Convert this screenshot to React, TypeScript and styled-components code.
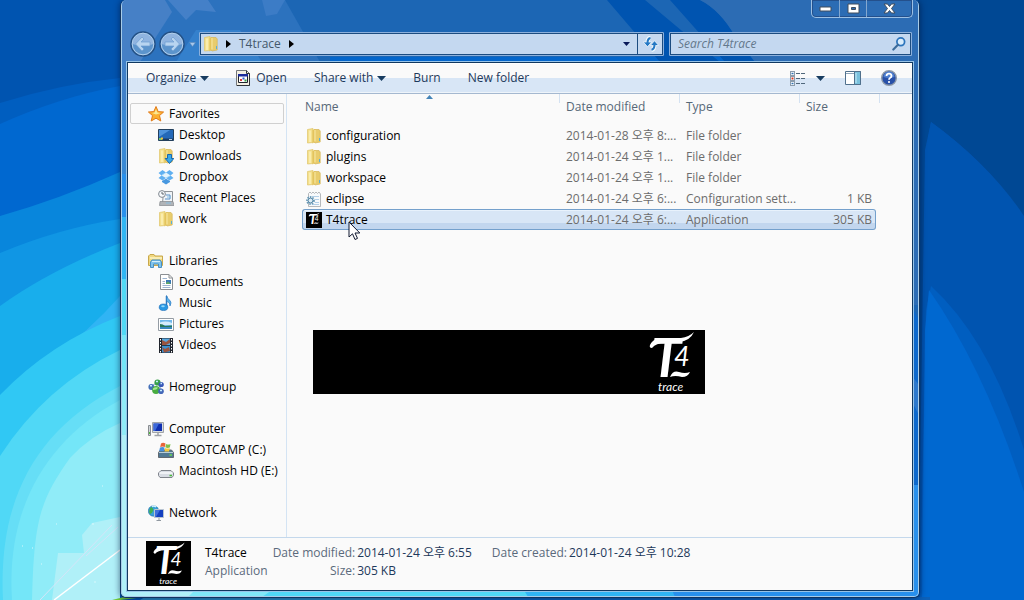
import React from "react";
import styled, { createGlobalStyle, css } from "styled-components";

const GlobalStyle = createGlobalStyle`
  * { box-sizing: border-box; }
  body {
    margin: 0;
    background: #0054b0;
    font-family: "Open Sans", "Noto Sans CJK KR", sans-serif;
    font-size: 12px;
    line-height: 18px;
    color: #000;
  }
  button, input { font: inherit; }
  ul { list-style: none; margin: 0; padding: 0; }
  svg { display: block; flex: none; }
`;

/* ---------- desktop and window ---------- */

const Desktop = styled.div`
  position: relative;
  display: flex;
  min-height: 100vh;
  padding: 0 104px 2px 120px;
  overflow: hidden;
`;

const Backdrop = styled.svg`
  position: absolute;
  inset: 0;
  width: 100%;
  height: 100%;
`;

const WindowFrame = styled.main`
  position: relative;
  flex: 1;
  min-width: 0;
  display: flex;
  flex-direction: column;
  padding: 0 6px 6px;
  border: 1px solid #103460;
  border-top: 0;
  border-radius: 6px;
  overflow: hidden;
  background: #2c70bc;
  box-shadow: 0 0 6px rgba(0, 20, 60, 0.6);

  &::after {
    content: "";
    position: absolute;
    inset: 0;
    border: 1px solid #a8cce8;
    border-top: 0;
    border-radius: 5px;
    pointer-events: none;
  }
`;

const TitleBar = styled.div`
  position: relative;
  display: flex;
  justify-content: flex-end;
  height: 32px;
`;

const WindowButtons = styled.div`
  display: flex;
  height: 18px;
  border: 1px solid #9cc0e4;
  border-top: 0;
  border-radius: 0 0 5px 5px;
  box-shadow: inset 0 0 0 1px #24508c;
`;

const WindowButton = styled.button<{ $wide?: boolean }>`
  display: flex;
  align-items: center;
  justify-content: center;
  width: ${(p) => (p.$wide ? 46 : 27)}px;
  padding: 0;
  border: 0;
  background: transparent;
  & + & { border-left: 1px solid #84a8d0; }
`;

const NavBar = styled.div`
  position: relative;
  display: flex;
  align-items: center;
  height: 24px;
  margin-bottom: 6px;
  padding: 0 1px 0 3px;
`;

const IconButton = styled.button`
  display: flex;
  align-items: center;
  justify-content: center;
  padding: 0;
  border: 0;
  background: transparent;
`;

const HistoryGroup = styled.div`
  display: flex;
  gap: 3px;
`;

const HistoryButton = styled(IconButton)`
  width: 14px;
`;

const field = css`
  display: flex;
  align-items: center;
  height: 24px;
  border: 1px solid #8cb0dc;
  box-shadow: inset 0 0 0 1px #1c4c80;
  background: #c4d8f0;
  border-radius: 1px;
`;

const AddressBar = styled.div`
  ${field}
  flex: 1;
  min-width: 0;
  margin-right: 5px;
  padding-left: 3px;
`;

const Breadcrumbs = styled.nav`
  display: flex;
  align-items: center;
  gap: 8px;
  margin-left: 7px;
`;

const Crumb = styled.a`
  color: #44586c;
  text-decoration: none;
`;

const AddressTools = styled.div`
  display: flex;
  align-self: stretch;
  margin-left: auto;
`;

const AddressTool = styled(IconButton)`
  width: 22px;
  & + & { width: 26px; border-left: 1px solid #1c4c80; }
`;

const SearchBox = styled.label`
  ${field}
  width: 243px;
  padding: 0 5px 0 8px;
`;

const SearchInput = styled.input`
  flex: 1;
  min-width: 0;
  padding: 0;
  border: 0;
  outline: 0;
  background: transparent;
  font-style: italic;
  &::placeholder { color: #64788c; opacity: 1; }
`;

const Client = styled.div`
  position: relative;
  flex: 1;
  display: flex;
  flex-direction: column;
  border: 1px solid #103860;
  outline: 1px solid #98c4e8;
  background: #fafafa;
`;

/* ---------- command bar ---------- */

const CommandBar = styled.div`
  display: flex;
  align-items: center;
  justify-content: space-between;
  height: 31px;
  padding: 0 15px 1px 18px;
  border-top: 1px solid #fff;
  border-bottom: 1px solid #a4b8d0;
  background: linear-gradient(#fafafa 0 14px, #d8e6f6 14px 28px, #eef4fa 28px);
`;

const CommandGroup = styled.div<{ $gap: number }>`
  display: flex;
  align-items: center;
  gap: ${(p) => p.$gap}px;
`;

const Command = styled.button<{ $gap?: number }>`
  display: flex;
  align-items: center;
  gap: ${(p) => p.$gap ?? 4}px;
  padding: 0;
  border: 0;
  background: transparent;
  color: #1e395b;
  white-space: nowrap;
`;

/* ---------- navigation pane ---------- */

const Body = styled.div`
  flex: 1;
  display: flex;
  min-height: 0;
`;

const Sidebar = styled.nav`
  flex: none;
  width: 159px;
  padding: 9px 2px 14px;
  border-right: 1px solid #d4e4f4;
`;

const Section = styled.section`
  & + & { margin-top: 21px; }
`;

const NavLink = styled.a<{ $nested?: boolean; $focused?: boolean }>`
  display: flex;
  align-items: center;
  gap: 5px;
  height: 21px;
  padding-left: ${(p) => (p.$nested ? 27 : 17)}px;
  border: 1px solid ${(p) => (p.$focused ? "#d0d0d0" : "transparent")};
  border-radius: 2px;
  color: #000;
  text-decoration: none;
  white-space: nowrap;
`;

/* ---------- file list ---------- */

const FilePane = styled.section`
  flex: 1;
  min-width: 0;
  padding-left: 15px;
`;

const FileTable = styled.table`
  width: 574px;
  table-layout: fixed;
  border-collapse: separate;
  border-spacing: 0;
`;

const HeadCell = styled.th<{ $width: number; $first?: boolean; $last?: boolean }>`
  position: relative;
  width: ${(p) => p.$width}px;
  height: 31px;
  padding: 4px 0 0 ${(p) => (p.$first ? 3 : 6)}px;
  vertical-align: top;
  text-align: left;
  font-weight: 400;
  color: #566878;

  &::after {
    content: "";
    position: absolute;
    top: 0;
    right: ${(p) => (p.$last ? -4 : 0)}px;
    width: 1px;
    height: 9px;
    background: #d4e2f2;
  }
`;

const SortMark = styled.span`
  position: absolute;
  top: 1px;
  left: 0;
  right: 4px;
  display: flex;
  justify-content: center;
`;

const FileRow = styled.tr<{ $selected?: boolean }>`
  ${(p) =>
    p.$selected &&
    css`
      td {
        border-top-color: #74a0cc;
        border-bottom-color: #74a0cc;
        background: linear-gradient(#e8f2fc 0 1px, #d8e6f6 1px 13px, #c2d6ee 13px);
      }
      td:first-child { border-left-color: #74a0cc; border-radius: 3px 0 0 3px; }
      td:last-child { border-right-color: #74a0cc; border-radius: 0 3px 3px 0; }
    `}
`;

const Cell = styled.td<{ $right?: boolean }>`
  height: 21px;
  padding: 0 ${(p) => (p.$right ? 3 : 0)}px 0 6px;
  border: solid transparent;
  border-width: 1px 0;
  line-height: 19px;
  color: #6c6c6c;
  text-align: ${(p) => (p.$right ? "right" : "left")};
  white-space: nowrap;
  &:last-child { border-right-width: 1px; }
`;

const NameCell = styled(Cell)`
  position: relative;
  padding-left: 3px;
  border-left-width: 1px;
  color: #000;
`;

const NameLine = styled.span`
  display: flex;
  align-items: center;
  gap: 4px;
  height: 19px;
`;

const Pointer = styled.span`
  position: absolute;
  left: 45px;
  top: 11px;
  z-index: 1;
`;

const Banner = styled.div`
  display: flex;
  justify-content: flex-end;
  width: 392px;
  margin: 100px 0 0 11px;
  padding-right: 2px;
  background: #000;
`;

/* ---------- details pane ---------- */

const Details = styled.footer`
  display: flex;
  height: 53px;
  padding: 3px 18px 0;
  border-top: 1px solid #c4d8ec;
  color: #5a6a7c;
`;

const Title = styled.div`
  margin: 3px 5px 0 14px;
`;

const FileTitle = styled.div`
  color: #000;
`;

const Facts = styled.dl`
  display: grid;
  grid-template-columns: auto auto;
  align-content: start;
  column-gap: 2px;
  margin: 3px 20px 0 0;
  dt { text-align: right; }
  dd { margin: 0; color: #1e395b; }
`;

/* ---------- drawings ---------- */

const Wallpaper = () => (
  <Backdrop viewBox="0 0 1024 600" preserveAspectRatio="none" aria-hidden="true">
    <rect width="1024" height="600" fill="#0054b0" />
    <path d="M0 103 Q60 84 120 78V600H0Z" fill="#005ec0" />
    <path d="M0 124 Q60 97 120 86V600H0Z" fill="#0068d0" />
    <path d="M0 216 Q60 199 120 172V600H0Z" fill="#0886dc" />
    <path d="M0 253 Q60 228 120 219V600H0Z" fill="#1096e4" />
    <path d="M0 306 Q50 270 120 243V600H0Z" fill="#18aeec" />
    <path d="M48 362 Q90 330 120 296V600H48Z" fill="#30b4f4" />
    <path d="M0 395 Q50 343 120 316V600H0Z" fill="#30c8f4" />
    <path d="M0 456 Q45 386 120 350V600H0Z" fill="#50d8f6" />
    <path d="M3 600 C-2 500 35 430 120 386V600Z" fill="#66def6" />
    <path d="M12 600 C6 510 45 440 120 400V600Z" fill="#74e6f8" />
    <path d="M32 600 C34 520 40 500 70 458 Q90 436 120 423V600Z" fill="#90ecf8" />
    <path d="M52 600 L58 553H84L82 535L92 523L120 517V600Z" fill="#b0f0f8" />
    <path d="M54 600L120 550" stroke="#fff" strokeWidth="1.5" />
    <path d="M40 600L112 525M86 556L118 527" stroke="#d4e4f8" />
    <path d="M92 524h2M94 582h2M22 546h1M32 548h1M56 524h1M41 564h1M102 486h1" stroke="#d8f8fc" />
    <path d="M918 0H1024V218Q990 165 931 122L925 150L918 600Z" fill="#004894" />
    <path d="M931 122Q990 165 1024 216V600H920L926 150Z" fill="#0054b0" />
    <path d="M931 286Q990 340 1024 450V600H920L926 310Z" fill="#005ec0" />
    <path d="M929 290Q985 370 1024 492V600H922L925 330Z" fill="#0068d0" />
    <path d="M112 600L124 597H145L120 600Z" fill="#70c838" />
    <path d="M145 597H400V600H140Z" fill="#2888c0" />
    <path d="M400 597H930V600H400Z" fill="#0c60b8" />
  </Backdrop>
);

const Glass = () => (
  <Backdrop viewBox="121 0 798 597" preserveAspectRatio="none" aria-hidden="true">
    <rect x="121" width="798" height="597" fill="#1c66b4" />
    <path d="M121 0H285L320 62H121Z" fill="#2c72be" />
    <path d="M121 0H165L172 12L140 62H121Z" fill="#4680c6" />
    <path d="M168 0H208L216 12L196 10L186 20Z" fill="#4480c8" />
    <path d="M262 0H285L277 14L266 16Z" fill="#3c7cc6" />
    <path d="M176 62L196 30H240L262 62Z" fill="#3480cc" />
    <path d="M330 57H770V63H330Z" fill="#0466cc" />
    <path d="M607 0H645L700 46L720 62H660Z" fill="#0054b0" />
    <path d="M670 0H700Q720 10 735 36L755 62H725Z" fill="#0054b0" />
    <path d="M700 0H919V62H755L735 36Q720 10 700 0Z" fill="#2c6cb4" />
    <path d="M121 60H129V150H121Z" fill="#4080c8" />
    <path d="M121 110H129V176H121Z" fill="#3888d4" />
    <path d="M121 174H129V220H121Z" fill="#2890ec" />
    <path d="M121 217H129V282H121Z" fill="#30b6f4" />
    <path d="M121 279H129V340H121Z" fill="#50d8f6" />
    <path d="M121 335H129V383H121Z" fill="#74e6f8" />
    <path d="M121 380H129V440H121Z" fill="#90ecf8" />
    <path d="M121 435H129V590H200V597H121Z" fill="#b0f0f8" />
    <path d="M195 590H290V597H188Z" fill="#80e8f8" />
    <path d="M272 590H530V597H262Z" fill="#50d8f6" />
    <path d="M524 590H680V597H528Z" fill="#30b4f4" />
    <path d="M672 590H919V597H675Z" fill="#2890ec" />
    <path d="M911 62H919V305H911Z" fill="#2c6cb4" />
    <path d="M911 305L919 320V485H911Z" fill="#0c68cc" />
    <path d="M911 375L919 385V415L911 400Z" fill="#2c78cc" />
    <path d="M911 485H919V597H911Z" fill="#2890ec" />
  </Backdrop>
);

const Ico = ({ children, size = 16 }: { children: React.ReactNode; size?: number }) => (
  <svg width={size} height={size} viewBox="0 0 16 16" fill="none" aria-hidden="true">
    {children}
  </svg>
);

const Caret = () => (
  <svg width="9" height="5" viewBox="0 0 9 5" aria-hidden="true">
    <path d="M0 0H9L4.500 5Z" fill="#183c60" />
  </svg>
);

const CrumbArrow = () => (
  <svg width="5" height="8" viewBox="0 0 5 8" aria-hidden="true">
    <path d="M0 0L5 4L0 8Z" fill="#000" />
  </svg>
);

const RoundArrow = ({ flip }: { flip?: boolean }) => (
  <svg width="26" height="26" viewBox="0 0 26 26" fill="none" aria-hidden="true">
    <circle cx="13" cy="13" r="12" fill="#5c94cc" stroke="#245084" strokeWidth="1.500" />
    <path d="M2.500 13A10.500 10.500 0 0 1 23.500 13Q13 17 2.500 13Z" fill="#90b4e0" />
    <circle cx="13" cy="13" r="10.800" stroke="#b4d0ec" />
    <path
      d="M12 6L5.500 13L12 20L14 18L11 15H20V11H11L14 8Z"
      transform={flip ? "matrix(-1 0 0 1 26 0)" : undefined}
      fill="#b8d4f0"
      stroke="#6c9cd0"
      strokeWidth=".7"
    />
  </svg>
);

const Folder = () => (
  <>
    <path d="M1.500 1.500L7 .5V14.500L1.500 15Z" fill="#f4e08c" stroke="#e0c468" strokeWidth=".7" />
    <path d="M8 1.500H13L14.200 3V14L9 15L8 14Z" fill="#e8cc6c" stroke="#d4b458" strokeWidth=".7" />
    <path d="M6.500 2L10 1V13L6.500 15.500Z" fill="#e4c45c" />
    <path d="M9 2V13.500" stroke="#fcf0b4" />
    <path d="M4 2.500V14" stroke="#fcf0b8" strokeWidth="1.500" />
    <path d="M13.500 10V13" stroke="#58b0d8" />
  </>
);

const FolderIcon = () => <Ico><Folder /></Ico>;

const StarIcon = () => (
  <Ico>
    <path d="M8 .5L10.200 5.600L15.600 6L11.500 9.600L12.800 15L8 12.200L3.200 15L4.500 9.600L.4 6L5.800 5.600Z" fill="#fcb030" stroke="#e07c1c" />
    <path d="M8 3L9.400 6.600L12.800 7L8 8.500L4 7L6.600 6.600Z" fill="#fce894" />
  </Ico>
);

const DesktopIcon = () => (
  <Ico>
    <path d="M.5 2.500H15.500V13.500H.5Z" fill="#2468b8" stroke="#24405c" />
    <path d="M1 3H12L1 10Z" fill="#5094dc" />
    <path d="M1 11.500H15V13H1Z" fill="#1c3c64" />
    <path d="M1 11h3v2H1Z" fill="#78c868" />
    <path d="M3 10.500h2v2H3Z" fill="#f0c040" />
    <path d="M11 12.500H14" stroke="#b8d0e8" />
  </Ico>
);

const DownloadsIcon = () => (
  <Ico>
    <Folder />
    <path d="M9.500 6.500H13.500V10.500H15.800L11.500 15.500L7.200 10.500H9.500Z" fill="#38a8e8" stroke="#1868b0" />
  </Ico>
);

const DropboxIcon = () => (
  <Ico>
    <path d="M4.500 1L8 3.500L11.500 1L15.500 4L12.500 6.500L15.500 9L11.500 11.500L8 9L4.500 11.500L.5 9L3.500 6.500L.5 4Z" fill="#60b0f0" />
    <path d="M8 3.500L12.500 6.500L8 9L3.500 6.500Z" fill="#e4f4fc" />
    <path d="M4 12L8 9.800L12 12V13L8 15.500L4 13Z" fill="#4898e0" />
    <path d="M3.500 6.500L8 3.500M12.500 6.500L8 9" stroke="#a8d8f8" strokeWidth=".8" />
  </Ico>
);

const RecentIcon = () => (
  <Ico>
    <path d="M5.500 1.500H14.500V13.500H4.500Z" fill="#f0f4f8" stroke="#909498" />
    <path d="M2 11.500H15L16 15.500H1.500Z" fill="#b0b4b8" stroke="#84888c" strokeWidth=".7" />
    <path d="M8 5H12V9H7" stroke="#5890c8" />
    <path d="M9 7H13M8 13H13" stroke="#84bce0" />
    <circle cx="4" cy="4" r="3.400" fill="#f8fafc" stroke="#808890" />
    <path d="M4 2V4H6" stroke="#606870" />
  </Ico>
);

const LibrariesIcon = () => (
  <Ico>
    <path d="M.5 3L2 1.500H6L7 3H14.500V12.500H.5Z" fill="#f0d880" stroke="#c8a84c" />
    <path d="M2 5H14" stroke="#fcf4c4" strokeWidth="1.500" />
    <path d="M2.500 14.500V9L4 7H12L13.500 9V14.500H10.500V11H5.500V14.500Z" fill="#80c4ec" stroke="#4890c4" />
    <path d="M4 8.500H12" stroke="#d4f0fc" />
  </Ico>
);

const DocumentIcon = () => (
  <Ico>
    <path d="M2.500 .5H11L14.500 4V15.500H2.500Z" fill="#fff" stroke="#8c9094" />
    <path d="M11 .5V4H14.500" stroke="#8c9094" />
    <path d="M4.500 4.500H9M4.500 7.500H7M4.500 9.500H7M4.500 11.500H12.500M4.500 13.500H12.500" stroke="#9cb4d0" />
    <path d="M8 6H13V10H8Z" fill="#3878b8" />
    <path d="M8 9L10 7.500L13 10H8Z" fill="#60a868" />
  </Ico>
);

const MusicIcon = () => (
  <Ico>
    <path d="M8.500 1V12" stroke="#2c78c0" strokeWidth="1.500" />
    <path d="M8.500 .5Q9.500 4 12 5.500Q14 7.500 12 11Q12.500 7.500 8.500 6Z" fill="#58b4ec" stroke="#2c78c0" strokeWidth=".7" />
    <ellipse cx="5.500" cy="12.300" rx="4.300" ry="3.300" fill="#2898e4" stroke="#1868b4" strokeWidth=".6" />
    <ellipse cx="5" cy="11.300" rx="1.800" ry="1" fill="#90d8fc" />
  </Ico>
);

const PictureIcon = () => (
  <Ico>
    <path d="M.5 2.500H15.500V14.500H.5Z" fill="#fff" stroke="#949ca4" />
    <path d="M2 4H14V13H2Z" fill="#70b8ec" />
    <path d="M2 6.500Q8 4.500 14 7V9H2Z" fill="#d4ecfc" />
    <path d="M2 8Q5 8 7 10L14 9.500V11H2Z" fill="#287858" />
    <path d="M2 11H14V13H2Z" fill="#3888c0" />
  </Ico>
);

const VideoIcon = () => (
  <Ico>
    <path d="M1 1H15V16H1Z" fill="#20242c" />
    <path d="M4 1.500H12V8H4Z" fill="#58a8e0" />
    <path d="M4 8.800H12V15.500H4Z" fill="#3c90d0" />
    <path d="M4 3L8 5L12 2V6L8 8H4ZM4 10L7 12L11 10L12 14L6 15.500Z" fill="#985440" />
    <path d="M2.500 2V16M13.500 2V16" stroke="#fff" strokeDasharray="1.500 1.500" />
  </Ico>
);

const HomegroupIcon = () => (
  <Ico>
    <path d="M4 7L10 3L13 11H7Z" stroke="#a0b8d0" strokeWidth="1.500" />
    <circle cx="3.300" cy="8" r="2.900" fill="#4470b8" />
    <circle cx="9.500" cy="3.500" r="3.100" fill="#38a048" />
    <circle cx="13.200" cy="5.500" r="2.600" fill="#3858b8" />
    <circle cx="8" cy="11" r="3.900" fill="#48ac40" />
    <circle cx="13" cy="12.300" r="2.800" fill="#4468b8" />
    <path d="M5 9.500Q7 7.500 10 8.500Q9 11 5 11Z" fill="#a8e890" />
    <path d="M2 6.800h2M8 2.500h2M12.500 4.500h1.500M12 11.500h2" stroke="#c4ecfc" strokeWidth="1.500" />
  </Ico>
);

const ComputerIcon = () => (
  <Ico>
    <path d="M.5 4.500H2.500V14.500H.5Z" fill="#d0d4d8" stroke="#888c90" />
    <path d="M1 12h1" stroke="#50b840" strokeWidth="2" />
    <path d="M4.500 1.500H15.500V11.500H4.500Z" fill="#d8dce0" stroke="#a0a4a8" />
    <path d="M5.500 2.500H14V10H5.500Z" fill="#1030b0" />
    <path d="M5.500 2.500H11L7 10H5.500Z" fill="#3c68d8" />
    <path d="M10 12V14M6.500 14.500H13.500" stroke="#a0a4a8" strokeWidth="1.500" />
  </Ico>
);

const DriveIcon = () => (
  <Ico>
    <path d="M3 7.500H13L15.500 10V12.500L14 14.500H2L.5 12.500V10Z" fill="#d8dce4" stroke="#80848c" />
    <path d="M1.500 10H14.500" stroke="#f8fafc" strokeWidth="1.500" />
    <path d="M11.500 12.500H14" stroke="#48b838" strokeWidth="1.500" />
  </Ico>
);

const SystemDriveIcon = () => (
  <Ico>
    <path d="M2.500 8H13.500L15.500 10.500V15.500H.5V10.500Z" fill="#507894" stroke="#606870" />
    <path d="M1 10.500H15" stroke="#b8ccd8" />
    <path d="M11.500 13H14" stroke="#68d850" strokeWidth="1.500" />
    <path d="M3 1.500Q5 0 7.500 1.500L6.800 5Q4.500 4 2.200 5Z" fill="#e86438" />
    <path d="M8 2Q10 3 12.500 2L11.800 5.500Q9.500 6.500 7.300 5.300Z" fill="#80c048" />
    <path d="M2 5.500Q4.500 4.500 6.600 5.500L6 9H1.200Z" fill="#4890dc" />
    <path d="M7.200 6Q9.500 7 11.700 6L11 9.500H6.500Z" fill="#f8c838" />
  </Ico>
);

const NetworkIcon = () => (
  <Ico>
    <circle cx="5.500" cy="6" r="5.200" fill="#38a0d8" stroke="#2070a8" strokeWidth=".6" />
    <path d="M3 2Q6 3 5 6T2 9Q0 6 3 2Z" fill="#40b050" />
    <path d="M4 1.500Q6 .5 8 2" stroke="#d4f4fc" strokeWidth="1.500" />
    <path d="M6.500 4.500H15.500V12.500H6.500Z" fill="#1440c0" stroke="#b8c4d0" />
    <path d="M7 5H12L8 12H7Z" fill="#4070dc" />
    <path d="M11 13V15M8.500 15.500H13" stroke="#9098a0" />
  </Ico>
);

const SettingsFileIcon = () => (
  <Ico>
    <path d="M2.500 2.500L4 1L5.500 2.500L7 1L8.500 2.500L10 1L11.500 2.500L13 1L14.500 3V15.500H2.500Z" fill="#f8fafc" stroke="#a4a8ac" strokeWidth=".8" />
    <path d="M6 5.500H13M9 8.500H13M9 11.500H13M6 13.500H13" stroke="#b4d0e8" />
    <circle cx="4.500" cy="9.500" r="3.400" stroke="#6c9cb8" strokeWidth="2" strokeDasharray="1.500 1" />
    <circle cx="4.500" cy="9.500" r="2.400" fill="#dcecf4" stroke="#5888a8" />
  </Ico>
);

const OpenIcon = () => (
  <Ico>
    <path d="M.5 .5H10.500L13.500 3.500V15.500H.5Z" fill="#f4f0e4" stroke="#74787c" />
    <path d="M10.500 .5V3.500H13.500V15.500H1" stroke="#303438" />
    <path d="M2.500 4.500H11.500V12.500H2.500Z" fill="#fff" stroke="#20242c" />
    <path d="M2 4H12V6.500H2Z" fill="#1c2c9c" />
    <path d="M4 9h2v2H4Z" fill="#d83838" />
    <path d="M6.500 7.500h2v2h-2Z" fill="#3058d0" />
    <path d="M8.500 9.500h2v2h-2Z" fill="#38a048" />
  </Ico>
);

const ViewIcon = () => (
  <Ico>
    {[1, 6, 11].map((y) => (
      <g key={y}>
        <rect x=".5" y={y + 0.5} width="4" height="4" fill="#fff" stroke="#8c9cac" />
        <path d={`M6 ${y + 2.5}H10M11 ${y + 2.5}H15`} stroke="#50687c" />
      </g>
    ))}
    <path d="M1.500 8.500h2" stroke="#d83820" strokeWidth="2" />
    <path d="M1.500 3.500h2M1.500 13.500h2" stroke="#3070b0" strokeWidth="1.500" />
  </Ico>
);

const PaneIcon = () => (
  <Ico>
    <path d="M.5 1.500H15.500V14.500H.5Z" fill="#fff" stroke="#50708c" />
    <path d="M1 3.500H15" stroke="#8ca4b8" />
    <path d="M9.500 1.500H15.500V14.500H9.500Z" fill="#78c0dc" stroke="#50708c" />
    <path d="M11 3V13" stroke="#c8ecf8" />
  </Ico>
);

const HelpIcon = () => (
  <Ico>
    <circle cx="8" cy="8" r="7.300" fill="#2850a8" stroke="#8c98a8" strokeWidth="1.400" />
    <path d="M2.500 7A5.500 5.500 0 0 1 13.500 7Q8 9 2.500 7Z" fill="#5080d0" />
    <path d="M5.500 6Q5.700 3.700 8 3.700T10.500 5.900Q10.500 7 9.200 7.700Q8 8.300 8 9.700" stroke="#fff" strokeWidth="1.800" />
    <circle cx="8" cy="12" r="1.100" fill="#fff" />
  </Ico>
);

const RefreshIcon = () => (
  <Ico>
    <path d="M7.500 1.500Q4.500 2 4.500 7M11.500 8.500Q11.500 13.500 8.500 14" stroke="#f0f8fc" strokeWidth="4" />
    <path d="M.3 6H8.700L4.500 10.800ZM7.300 9.500H15.700L11.500 4.700Z" fill="#2478c4" stroke="#f0f8fc" strokeWidth=".8" />
    <path d="M7.500 2Q4.500 2.500 4.500 7M11.500 8.500Q11.500 13 8.500 13.800" stroke="#2478c4" strokeWidth="2" />
  </Ico>
);

const SearchIcon = () => (
  <Ico size={14}>
    <circle cx="10" cy="5.500" r="4.400" fill="#d8ecfc" stroke="#2c74bc" strokeWidth="2" />
    <path d="M6.800 8.800L1.500 14.300" stroke="#3c6c9c" strokeWidth="2.400" strokeLinecap="round" />
  </Ico>
);

/* The product mark: italic lettering with brush flourishes on black. */
const Brand = ({ size, caption = true }: { size: number; caption?: boolean }) => (
  <svg width={size} height={size} viewBox="0 0 64 64" role="img" aria-label="T4trace">
    <rect width="64" height="64" fill="#000" />
    <g fill="#fff" fontStyle="italic" fontFamily="Lato, sans-serif">
      <text x="12" y="47" fontWeight="700" fontSize="54">
        T<tspan x="35" y="36" fontWeight="400" fontSize="27">4</tspan>
      </text>
      {caption && <text x="19" y="61" fontSize="12">trace</text>}
    </g>
    <path d="M20 8Q13 10 11 15Q10 18 13 18Q17 13 26 13L40 12Q51 11 55 2Q50 7 42 8Z" fill="#fff" />
    <path d="M31 47Q34 40 40 42Q46 44 51 42Q49 47 43 47Q36 45 31 47Z" fill="#fff" />
  </svg>
);

const PointerIcon = () => (
  <svg width="13" height="20" viewBox="0 0 13 20" aria-hidden="true">
    <path d="M1 1V16L4.500 12.800L7 18.500L9.500 17.400L7 12H11.800Z" fill="#fff" stroke="#101830" />
  </svg>
);

/* ---------- data ---------- */

type NavEntry = { label: string; icon: React.ReactNode };

const sections: { head: NavEntry; focused?: boolean; items: NavEntry[] }[] = [
  {
    head: { label: "Favorites", icon: <StarIcon /> },
    focused: true,
    items: [
      { label: "Desktop", icon: <DesktopIcon /> },
      { label: "Downloads", icon: <DownloadsIcon /> },
      { label: "Dropbox", icon: <DropboxIcon /> },
      { label: "Recent Places", icon: <RecentIcon /> },
      { label: "work", icon: <FolderIcon /> },
    ],
  },
  {
    head: { label: "Libraries", icon: <LibrariesIcon /> },
    items: [
      { label: "Documents", icon: <DocumentIcon /> },
      { label: "Music", icon: <MusicIcon /> },
      { label: "Pictures", icon: <PictureIcon /> },
      { label: "Videos", icon: <VideoIcon /> },
    ],
  },
  { head: { label: "Homegroup", icon: <HomegroupIcon /> }, items: [] },
  {
    head: { label: "Computer", icon: <ComputerIcon /> },
    items: [
      { label: "BOOTCAMP (C:)", icon: <SystemDriveIcon /> },
      { label: "Macintosh HD (E:)", icon: <DriveIcon /> },
    ],
  },
  { head: { label: "Network", icon: <NetworkIcon /> }, items: [] },
];

const files = [
  { name: "configuration", icon: <FolderIcon />, date: "2014-01-28 오후 8:...", type: "File folder", size: "" },
  { name: "plugins", icon: <FolderIcon />, date: "2014-01-24 오후 1...", type: "File folder", size: "" },
  { name: "workspace", icon: <FolderIcon />, date: "2014-01-24 오후 1...", type: "File folder", size: "" },
  { name: "eclipse", icon: <SettingsFileIcon />, date: "2014-01-24 오후 6:...", type: "Configuration sett...", size: "1 KB" },
  { name: "T4trace", icon: <Brand size={16} caption={false} />, date: "2014-01-24 오후 6:...", type: "Application", size: "305 KB", selected: true },
];

export default function App() {
  return (
    <>
      <GlobalStyle />
      <Desktop>
        <Wallpaper />
        <WindowFrame>
          <Glass />
          <TitleBar>
            <WindowButtons>
              <WindowButton aria-label="Minimize">
                <svg width="13" height="6" viewBox="0 0 13 6"><path d="M1 1H12V5H1Z" fill="#fff" stroke="#404c5c" /></svg>
              </WindowButton>
              <WindowButton aria-label="Maximize">
                <svg width="13" height="11" viewBox="0 0 13 11"><path d="M1 1H12V10H1ZM4.500 4.500V6.500H8.500V4.500Z" fill="#fff" fillRule="evenodd" stroke="#404c5c" /></svg>
              </WindowButton>
              <WindowButton $wide aria-label="Close">
                <svg width="13" height="11" viewBox="0 0 13 11"><path d="M1 1H4.500L6.500 3.500L8.500 1H12L8.500 5.500L12 10H8.500L6.500 7.500L4.500 10H1L4.500 5.500Z" fill="#fff" stroke="#404c5c" /></svg>
              </WindowButton>
            </WindowButtons>
          </TitleBar>
          <NavBar>
            <HistoryGroup>
              <IconButton aria-label="Back"><RoundArrow /></IconButton>
              <IconButton aria-label="Forward"><RoundArrow flip /></IconButton>
            </HistoryGroup>
            <HistoryButton aria-label="Recent pages">
              <svg width="7" height="5" viewBox="0 0 7 5"><path d="M.5 .5H6.500L3.500 4.500Z" fill="#a8c8ec" stroke="#5c84b0" strokeWidth=".5" /></svg>
            </HistoryButton>
            <AddressBar>
              <FolderIcon />
              <Breadcrumbs aria-label="Address">
                <CrumbArrow />
                <Crumb href="#t4trace">T4trace</Crumb>
                <CrumbArrow />
              </Breadcrumbs>
              <AddressTools>
                <AddressTool aria-label="Previous locations">
                  <svg width="7" height="4" viewBox="0 0 7 4"><path d="M0 0H7L3.500 4Z" fill="#081858" /></svg>
                </AddressTool>
                <AddressTool aria-label="Refresh"><RefreshIcon /></AddressTool>
              </AddressTools>
            </AddressBar>
            <SearchBox>
              <SearchInput type="text" placeholder="Search T4trace" aria-label="Search T4trace" />
              <SearchIcon />
            </SearchBox>
          </NavBar>
          <Client>
            <CommandBar>
              <CommandGroup $gap={27}>
                <Command>Organize <Caret /></Command>
                <Command>
                  <OpenIcon />Open
                </Command>
                <Command>Share with <Caret /></Command>
                <Command>Burn</Command>
                <Command>New folder</Command>
              </CommandGroup>
              <CommandGroup $gap={20}>
                <Command $gap={10} aria-label="Change your view"><ViewIcon /><Caret /></Command>
                <Command aria-label="Preview pane"><PaneIcon /></Command>
                <Command aria-label="Help"><HelpIcon /></Command>
              </CommandGroup>
            </CommandBar>
            <Body>
              <Sidebar aria-label="Locations">
                {sections.map((s) => (
                  <Section key={s.head.label}>
                    <NavLink href="#" $focused={s.focused}>{s.head.icon}{s.head.label}</NavLink>
                    <ul>
                      {s.items.map((i) => (
                        <li key={i.label}><NavLink href="#" $nested>{i.icon}{i.label}</NavLink></li>
                      ))}
                    </ul>
                  </Section>
                ))}
              </Sidebar>
              <FilePane>
                <FileTable>
                  <thead>
                    <tr>
                      <HeadCell $width={258} $first>
                        Name
                        <SortMark><svg width="7" height="4" viewBox="0 0 7 4"><path d="M0 4L3.500 0L7 4Z" fill="#4484b8" /></svg></SortMark>
                      </HeadCell>
                      <HeadCell $width={120}>Date modified</HeadCell>
                      <HeadCell $width={120}>Type</HeadCell>
                      <HeadCell $width={76} $last>Size</HeadCell>
                    </tr>
                  </thead>
                  <tbody>
                    {files.map((f) => (
                      <FileRow key={f.name} $selected={f.selected}>
                        <NameCell>
                          <NameLine>{f.icon}{f.name}</NameLine>
                          {f.selected && <Pointer><PointerIcon /></Pointer>}
                        </NameCell>
                        <Cell>{f.date}</Cell>
                        <Cell>{f.type}</Cell>
                        <Cell $right>{f.size}</Cell>
                      </FileRow>
                    ))}
                  </tbody>
                </FileTable>
                <Banner><Brand size={64} /></Banner>
              </FilePane>
            </Body>
            <Details>
              <Brand size={45} />
              <Title>
                <FileTitle>T4trace</FileTitle>
                <div>Application</div>
              </Title>
              <Facts>
                <dt>Date modified:</dt><dd>2014-01-24 오후 6:55</dd>
                <dt>Size:</dt><dd>305 KB</dd>
              </Facts>
              <Facts>
                <dt>Date created:</dt><dd>2014-01-24 오후 10:28</dd>
              </Facts>
            </Details>
          </Client>
        </WindowFrame>
      </Desktop>
    </>
  );
}
